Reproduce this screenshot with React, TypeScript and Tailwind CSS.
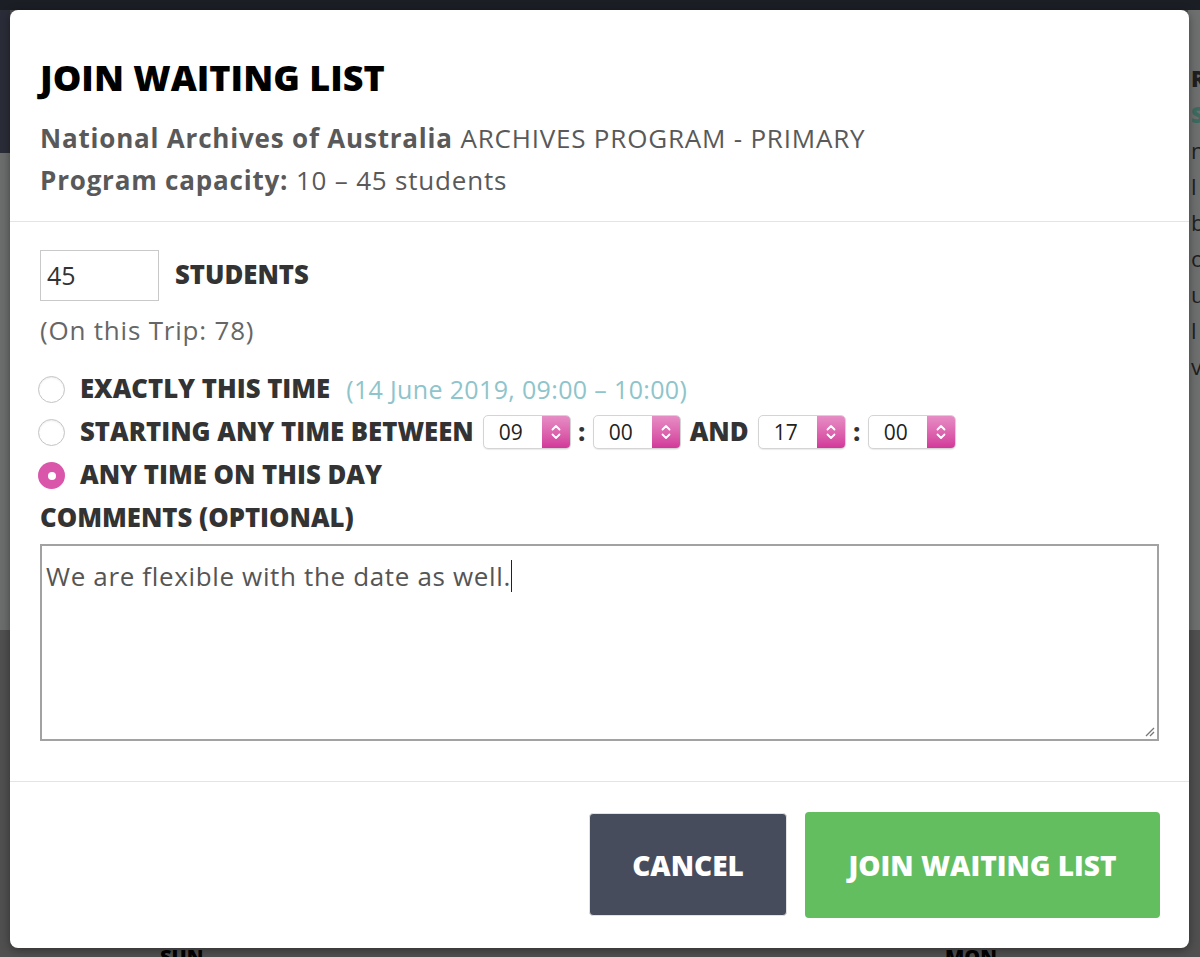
const font = { fontFamily: '"Open Sans", "Noto Sans", Arial, sans-serif' };

function Chevrons() {
  return (
    <svg width="12" height="22" viewBox="0 0 12 22" fill="none" stroke="white" strokeWidth="1.8" strokeLinecap="round" strokeLinejoin="round">
      <path d="M2.5 8.5 L6 5 L9.5 8.5" />
      <path d="M2.5 13.5 L6 17 L9.5 13.5" />
    </svg>
  );
}

function TimeSelect({ value }: { value: string }) {
  return (
    <div className="flex h-[34px] w-[88px] overflow-hidden rounded-[5px] border border-[#d4d4d4] bg-white shadow-[0_1px_1px_rgba(0,0,0,0.08)]">
      <span className="flex flex-1 items-center pl-[15px] text-[21px] font-normal text-[#222]">{value}</span>
      <span className="flex w-[28px] items-center justify-center bg-linear-to-b from-[#e68dc5] to-[#d1389a]">
        <Chevrons />
      </span>
    </div>
  );
}

function Radio({ checked }: { checked?: boolean }) {
  if (checked) {
    return (
      <span className="-ml-[2px] flex h-[27px] w-[27px] shrink-0 items-center justify-center rounded-full bg-[#da56aa]">
        <span className="h-[8px] w-[8px] rounded-full bg-white" />
      </span>
    );
  }
  return <span className="-ml-[2px] h-[27px] w-[27px] shrink-0 rounded-full border border-[#c4c4c4] bg-white shadow-[inset_0_1px_2px_rgba(0,0,0,0.08)]" />;
}

const label = "text-[25.7px] font-extrabold text-[#333]";
const body = "text-[26px] tracking-[0.8px]";

export default function App() {
  return (
    <div className="relative h-[957px] w-[1200px] overflow-hidden bg-[#4d4d4d]" style={font}>
      {/* dimmed page behind the modal */}
      <div className="flex h-full flex-col">
        <div className="h-[10px] bg-[#1c1e26]" />
        <div className="flex h-[620px]">
          <div className="flex w-[10px] flex-col">
            <div className="h-[143px] bg-[#2a2d38]" />
            <div className="flex-1 bg-[#6c6d6d]" />
          </div>
          <div className="flex-1" />
          <div className="flex w-[12px] flex-col overflow-hidden bg-[#6e6f6f] pl-[3px] text-[22px] leading-[36px] text-[#1f1f1f]">
            <span className="mt-[50px] font-extrabold">R</span>
            <span className="font-extrabold text-[#3d6b60]">S</span>
            <span>n</span>
            <span>l</span>
            <span>b</span>
            <span>o</span>
            <span>u</span>
            <span>l</span>
            <span>v</span>
          </div>
        </div>
        <div className="flex-1 bg-[#505050]" />
      </div>
      <div className="absolute left-[160px] top-[942px] text-[20px] font-extrabold text-black">SUN</div>
      <div className="absolute left-[945px] top-[942px] text-[20px] font-extrabold text-black">MON</div>

      {/* modal */}
      <div className="absolute left-[10px] top-[10px] flex h-[938px] w-[1179px] flex-col rounded-[8px] bg-white shadow-[0_2px_10px_rgba(0,0,0,0.4)]">
        <div className="border-b border-[#e4e4e4] px-[30px] pb-[20px] pt-[46px]">
          <h1 className="mb-[18px] text-[36px] font-extrabold leading-[43px] text-black">JOIN WAITING LIST</h1>
          <p className={`${body} leading-[42px] text-[#595959]`}>
            <span className="font-bold">National Archives of Australia</span> ARCHIVES PROGRAM - PRIMARY
          </p>
          <p className={`${body} leading-[42px] text-[#595959]`}>
            <span className="font-bold">Program capacity:</span> 10 – 45 students
          </p>
        </div>

        <div className="border-b border-[#e4e4e4] px-[30px] pb-[40px] pt-[28px]">
          <div className="flex items-center">
            <div className="flex h-[51px] w-[119px] items-center border border-[#c9c9c9] pl-[6px] text-[25px] text-[#333]">45</div>
            <span className={`ml-[16px] ${label}`}>STUDENTS</span>
          </div>
          <p className={`mt-[13px] ${body} leading-[32px] text-[#666]`}>(On this Trip: 78)</p>

          <div className="mt-[22px] flex flex-col">
            <div className="flex h-[43px] items-center">
              <Radio />
              <span className={`ml-[15px] ${label}`}>EXACTLY THIS TIME</span>
              <span className="ml-[16px] text-[25px] tracking-[0.35px] text-[#8ec4cb]">(14 June 2019, 09:00 – 10:00)</span>
            </div>
            <div className="flex h-[43px] items-center">
              <Radio />
              <span className={`ml-[15px] ${label}`}>STARTING ANY TIME BETWEEN</span>
              <div className="ml-[9px] flex items-center">
                <TimeSelect value="09" />
                <span className="w-[22px] text-center text-[24px] font-extrabold text-[#333]">:</span>
                <TimeSelect value="00" />
                <span className={`mx-[9px] ${label}`}>AND</span>
                <TimeSelect value="17" />
                <span className="w-[22px] text-center text-[24px] font-extrabold text-[#333]">:</span>
                <TimeSelect value="00" />
              </div>
            </div>
            <div className="flex h-[43px] items-center">
              <Radio checked />
              <span className={`ml-[15px] ${label}`}>ANY TIME ON THIS DAY</span>
            </div>
            <div className="flex h-[43px] items-center">
              <span className={label}>COMMENTS (OPTIONAL)</span>
            </div>
          </div>

          <div className="relative mt-[4px] h-[197px] border-2 border-[#a2a2a2] px-[4px] pt-[8px]">
            <p className="text-[26px] leading-[34px] tracking-[0.65px] text-[#555]">
              We are flexible with the date as well.
              <span className="inline-block h-[32px] w-[1.5px] translate-y-[6px] bg-[#222]" />
            </p>
            <svg className="absolute bottom-[2px] right-[2px]" width="12" height="12" viewBox="0 0 12 12" stroke="#777" strokeWidth="1.2">
              <path d="M11 3 L3 11" />
              <path d="M11 7 L7 11" />
            </svg>
          </div>
        </div>

        <div className="flex justify-end gap-[18px] px-[29px] pt-[31px]">
          <button className="flex h-[103px] w-[198px] items-center justify-center rounded-[4px] border border-[#e2e2e2] bg-[#474c5c] text-[28px] font-extrabold text-white">
            CANCEL
          </button>
          <button className="flex h-[106px] w-[355px] -translate-y-[1px] items-center justify-center rounded-[4px] bg-[#62be5e] text-[28px] font-extrabold text-white">
            JOIN WAITING LIST
          </button>
        </div>
      </div>
    </div>
  );
}
